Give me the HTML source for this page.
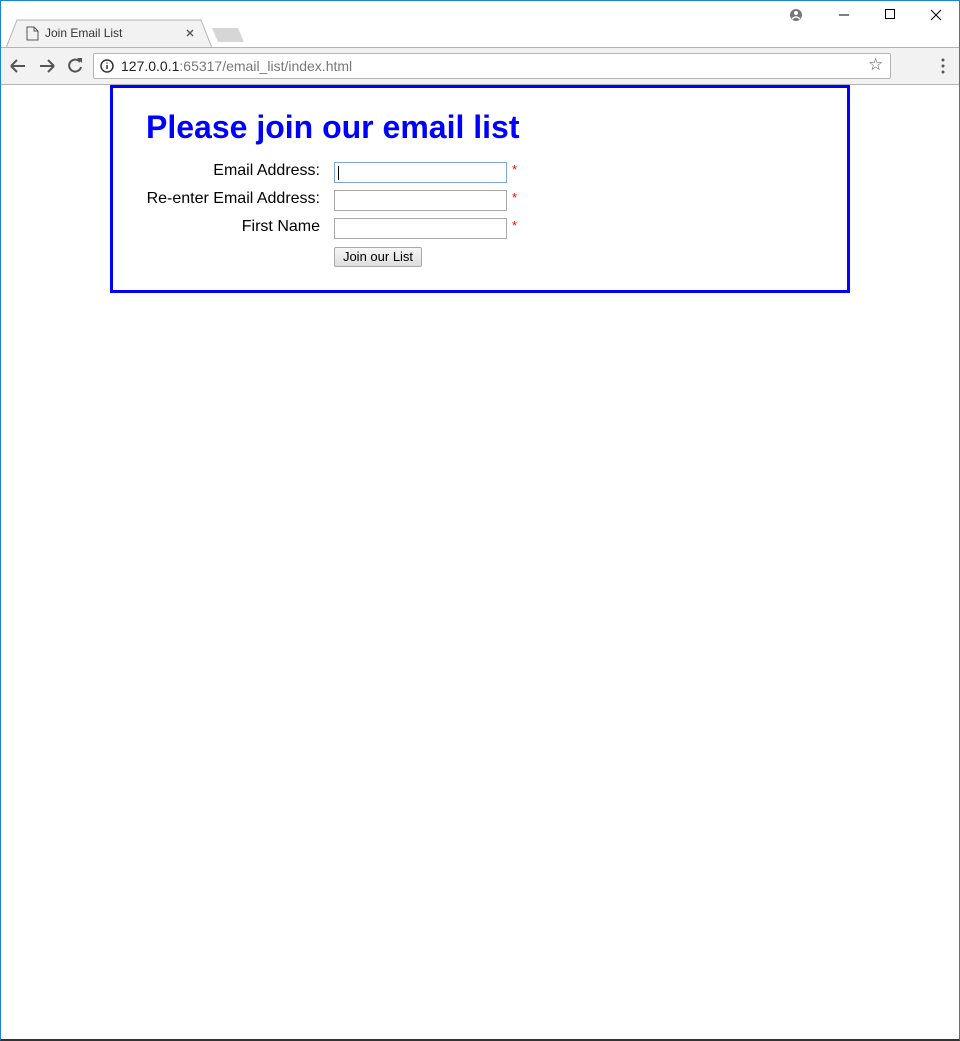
<!DOCTYPE html>
<html><head><style>
*{margin:0;padding:0;box-sizing:border-box}
body{width:960px;height:1041px;position:relative;background:#fff;font-family:"Liberation Sans",Arial,sans-serif;overflow:hidden}
.frame{position:absolute;left:0;top:0;width:960px;height:1041px;border:1px solid #1883d7;border-bottom:2px solid #333}
.toolbar{position:absolute;left:1px;top:47px;width:958px;height:38px;background:#f2f2f2;border-top:1px solid #b4b4b4;border-bottom:1px solid #b4b4b4}
.url{position:absolute;left:93px;top:53px;width:798px;height:26px;background:#fff;border:1px solid #b4b4b4;border-radius:2px;font-size:14px;line-height:24px;padding-left:27px;color:#222}
.url span{color:#777}
.box{position:absolute;left:110px;top:85px;width:740px;height:208px;border:3px solid #0000ff}
h1{position:absolute;left:146px;top:108px;font-size:32px;color:#0000ff;font-weight:bold;line-height:38px}
.lbl{position:absolute;right:640px;font-size:16px;color:#000}
.in{position:absolute;left:334px;width:173px;height:21px;border:1px solid #a9a9a9;background:#fff}
.star{position:absolute;left:512px;color:#f00;font-size:13px}
.btn{position:absolute;left:334px;top:247px;width:88px;height:20px;border:1px solid #a9a9a9;background:linear-gradient(#f6f6f6,#dedede);font-size:13px;text-align:center;line-height:18px;border-radius:2px}
</style></head><body>
<div class="frame"></div>
<svg style="position:absolute;left:0;top:0" width="960" height="90">
<path d="M6 48 L17 20 H201 L212 48" fill="#f2f2f2" stroke="#b4b4b4"/>
<path d="M212 28 H238 L244 42 H218 Z" fill="#d6d6d6"/>
<path d="M27 27 h7 l4 4 v9 h-11 z M34 27 v4 h4" fill="none" stroke="#555"/>
<path d="M187 30 l6 6 M193 30 l-6 6" stroke="#555" stroke-width="1.4"/>
<circle cx="796" cy="15" r="6" fill="#777"/><circle cx="796" cy="13" r="2" fill="#fff"/><path d="M792 19 q4 -4 8 0" stroke="#fff" fill="none" stroke-width="1.5"/>
<path d="M839 15 h10" stroke="#000"/>
<rect x="885.5" y="9.5" width="9" height="9" fill="none" stroke="#000"/>
<path d="M931 10 l10 10 M941 10 l-10 10" stroke="#000"/>
</svg>
<div class="toolbar"></div>
<div style="position:absolute;left:45px;top:26px;font-size:12px;color:#333">Join Email List</div>
<svg style="position:absolute;left:0;top:47px" width="960" height="38">
<path d="M11 19 h14 M11 19 l6 -6 M11 19 l6 6" stroke="#555" stroke-width="2" fill="none"/>
<path d="M40 19 h14 M54 19 l-6 -6 M54 19 l-6 6" stroke="#555" stroke-width="2" fill="none"/>
<path d="M80 15 a6 6 0 1 0 1 5" stroke="#555" stroke-width="2" fill="none"/><path d="M77 11 l5 0 l0 5 z" fill="#555"/>
<circle cx="943" cy="13" r="1.5" fill="#555"/><circle cx="943" cy="19" r="1.5" fill="#555"/><circle cx="943" cy="25" r="1.5" fill="#555"/>
</svg>
<div class="url">127.0.0.1<span>:65317/email_list/index.html</span></div>
<svg style="position:absolute;left:100px;top:59px" width="16" height="16"><circle cx="7" cy="7" r="6" fill="none" stroke="#333" stroke-width="1.5"/><path d="M7 6 v4 M7 3.5 v1" stroke="#333" stroke-width="1.5"/></svg>
<div style="position:absolute;left:868px;top:55px;font-size:17px;color:#555">☆</div>
<div class="box"></div>
<h1>Please join our email list</h1>
<div class="lbl" style="top:162px">Email Address:</div>
<div class="lbl" style="top:190px">Re-enter Email Address:</div>
<div class="lbl" style="top:218px">First Name</div>
<div class="in" style="top:162px;border-color:#7ea6e0"><div style="position:absolute;left:3px;top:3px;width:1px;height:14px;background:#000"></div></div>
<div class="in" style="top:190px"></div>
<div class="in" style="top:218px"></div>
<div class="star" style="top:162px">*</div>
<div class="star" style="top:190px">*</div>
<div class="star" style="top:218px">*</div>
<div class="btn">Join our List</div>
</body></html>
